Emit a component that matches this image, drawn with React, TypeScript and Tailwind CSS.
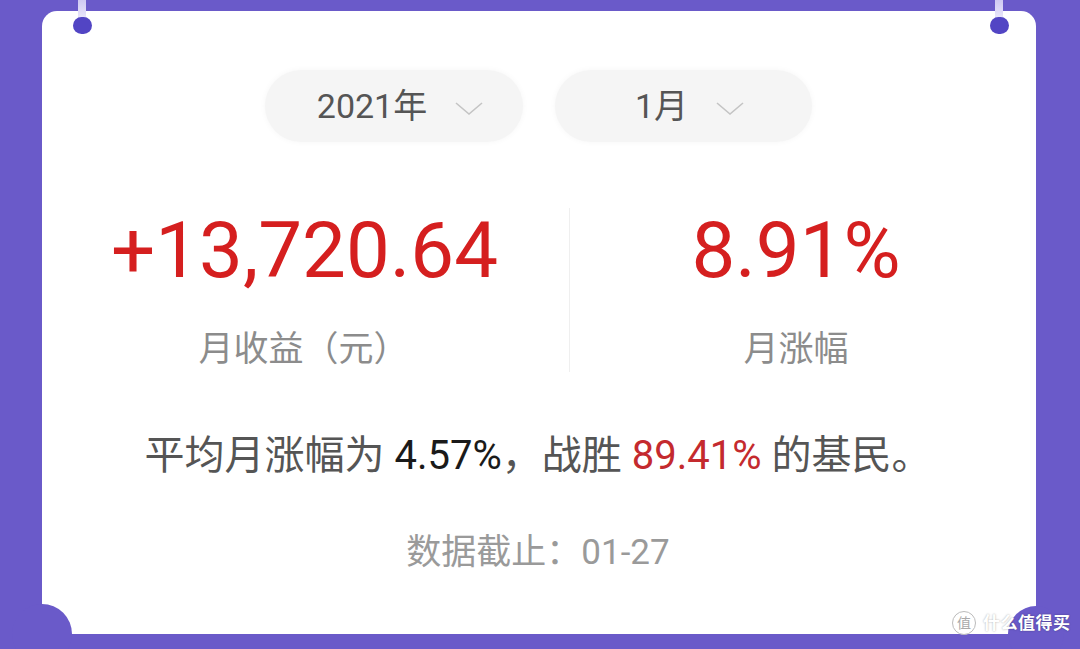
const font = { fontFamily: 'Roboto, "Noto Sans CJK SC", sans-serif' };

function Picker({ label, width }: { label: string; width: string }) {
    return (
        <div className={`flex items-center justify-center gap-[28px] h-[72px] ${width} pl-[12px] rounded-full bg-[#f5f5f5] shadow-[0_0_6px_rgba(0,0,0,0.04)]`}>
            <span className="text-[34px] leading-none text-[#555]">{label}</span>
            <svg width="28" height="14" viewBox="0 0 28 14" className="mt-[6px]">
                <polyline points="1,1 14,12 27,1" fill="none" stroke="#c4c4c4" strokeWidth="1.6" />
            </svg>
        </div>
    );
}

function Pin({ side }: { side: "left" | "right" }) {
    return (
        <div className={`absolute top-[-11px] ${side === "left" ? "left-[30px]" : "left-[947px]"} flex flex-col items-center w-[20px]`}>
            <div className="w-[8px] h-[20px] bg-gradient-to-b from-[#cfc9f2] to-[#ece9fb]" />
            <div className="w-[19px] h-[17px] -mt-[3px] rounded-full bg-[#5245c4]" />
        </div>
    );
}

export default function App() {
    return (
        <div className="relative w-[1080px] h-[649px] overflow-hidden bg-[#6a5ac9] pt-[11px] pl-[42px]" style={font}>
            <div className="relative w-[994px] h-[623px] bg-white rounded-t-[15px] flex flex-col items-center">
                <Pin side="left" />
                <Pin side="right" />

                {/* year / month pickers */}
                <div className="flex gap-[32px] mt-[59px] ml-[-1px]">
                    <Picker label="2021年" width="w-[258px]" />
                    <Picker label="1月" width="w-[257px]" />
                </div>

                {/* monthly stats */}
                <div className="flex w-full h-[164px] mt-[66px]">
                    <div className="w-[527px] flex flex-col items-center pt-[4px]">
                        <div className="text-[78px] leading-none text-[#d51f1f] pr-[2px]">+13,720.64</div>
                        <div className="text-[35px] leading-none text-[#8c8c8c] mt-[42px] mr-[4px]">月收益（元）</div>
                    </div>
                    <div className="w-px bg-[#efefef]" />
                    <div className="flex-1 flex flex-col items-center pt-[4px] pr-[14px]">
                        <div className="text-[78px] leading-none text-[#d51f1f]">8.91%</div>
                        <div className="text-[35px] leading-none text-[#8c8c8c] mt-[42px]">月涨幅</div>
                    </div>
                </div>

                <p className="text-[40px] leading-none text-[#555] mt-[64px] ml-[-2px] whitespace-nowrap">
                    平均月涨幅为 <span className="text-[#1a1a1a]">4.57%</span>，战胜 <span className="text-[#c42a2e]">89.41%</span> 的基民。
                </p>

                <p className="text-[35px] leading-none text-[#9a9a9a] mt-[59px] ml-[-2px]">数据截止：01-27</p>

                {/* notched bottom corners */}
                <div className="absolute left-[-30px] bottom-[-30px] w-[60px] h-[60px] rounded-full bg-[#6a5ac9]" />
                <div className="absolute right-[-28px] bottom-[-28px] w-[56px] h-[56px] rounded-full bg-[#6a5ac9]" />
            </div>

            {/* watermark */}
            <div className="absolute left-[952px] top-[611px] flex items-center gap-[7px] text-white [text-shadow:0_0_2px_rgba(0,0,0,0.35)]">
                <div className="w-[24px] h-[24px] rounded-full border-[1.5px] border-[#bbb] bg-white/80 flex items-center justify-center text-[14px] leading-none text-[#aaa] [text-shadow:none]">值</div>
                <span className="text-[17px] leading-none font-bold tracking-[0.5px]">什么值得买</span>
            </div>
        </div>
    );
}
